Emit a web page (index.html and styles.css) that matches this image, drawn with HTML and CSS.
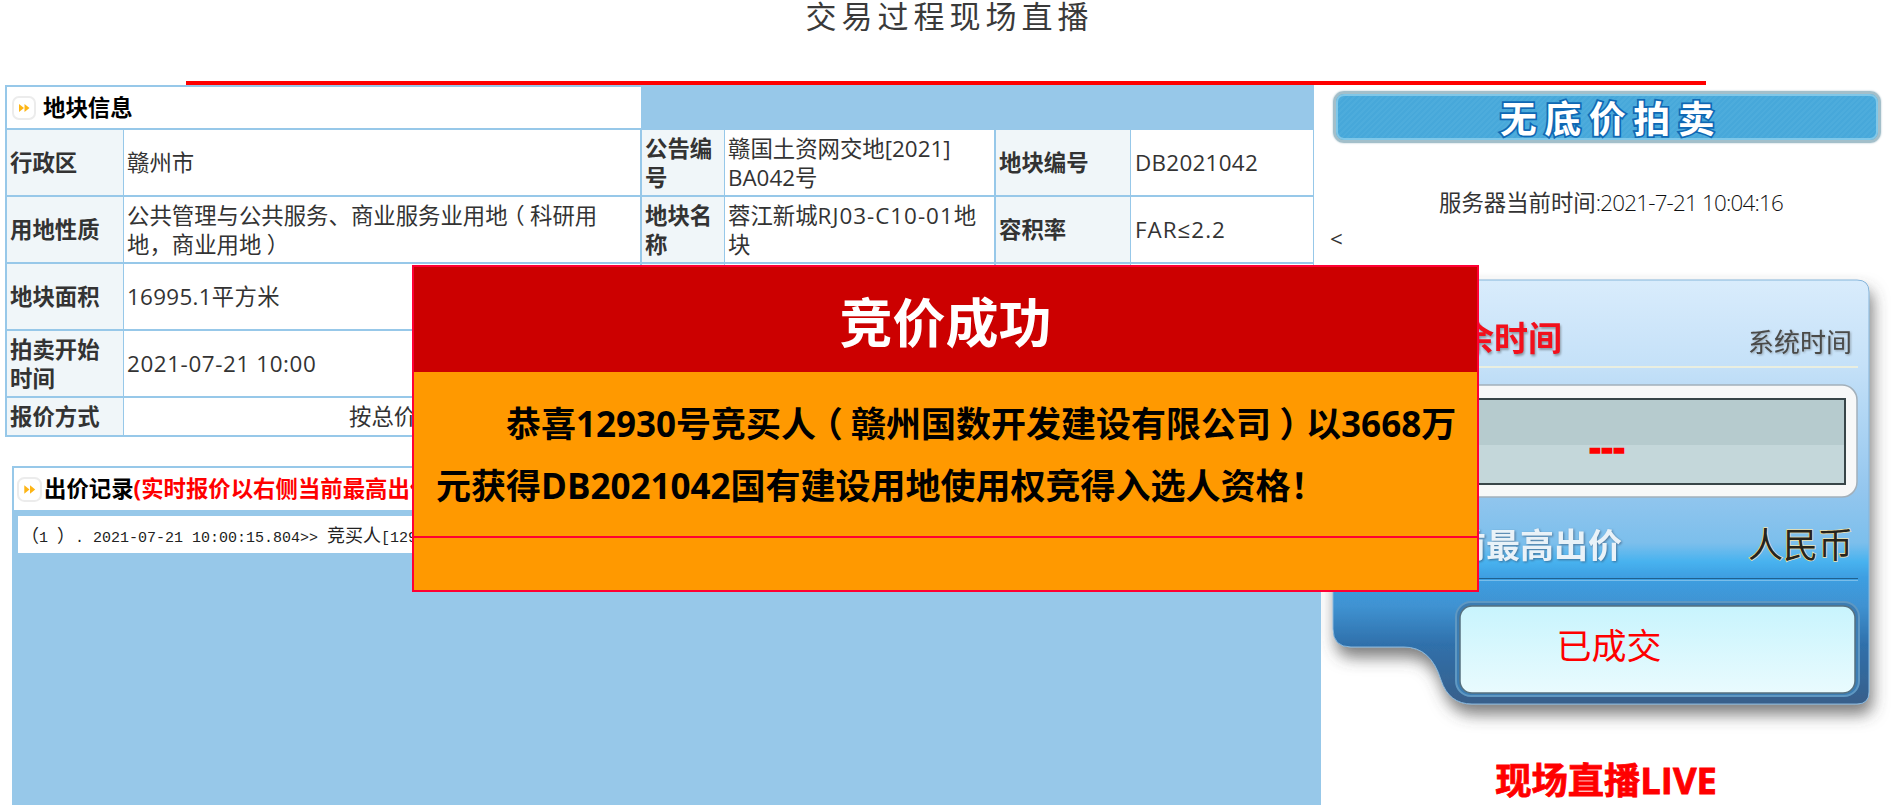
FILE: index.html
```html
<!DOCTYPE html>
<html lang="zh-CN">
<head>
<meta charset="utf-8">
<title>交易过程现场直播</title>
<link rel="stylesheet" href="styles.css">
</head>
<body>
<header class="page-title"><h1>交易过程现场直播</h1></header>
<main class="stage">
  <section class="left-col">
    <div class="info-grid">
      <div class="section-head head-wide">
        <svg class="head-icon" viewBox="0 0 24 24" aria-hidden="true"><rect x="1" y="1" width="22" height="22" rx="6" fill="#fff" stroke="#ececec" stroke-width="2"/><path d="M7 8l5 4-5 4zM12.500 8l5 4-5 4z" fill="#fdb515"/></svg>
        <span>地块信息</span>
      </div>
      <div class="head-fill"></div>
      <div class="label">行政区</div><div class="value end"><span>赣州市</span></div>
      <div class="label">公告编号</div><div class="value end"><span>赣国土资网交地[2021]<wbr>BA042号</span></div>
      <div class="label">地块编号</div><div class="value"><span class="tight">DB2021042</span></div>
      <div class="label">用地性质</div><div class="value end use-cell"><span>公共管理与公共服务、商业服务业用地<span class="punc paren-open">（</span>科研用地<span class="punc">，</span>商业用地<span class="punc paren-close">）</span></span></div>
      <div class="label">地块名称</div><div class="value end"><span>蓉江新城<span class="wider">RJ03-C10-01</span>地块</span></div>
      <div class="label">容积率</div><div class="value"><span class="wider">FAR≤2.2</span></div>
      <div class="label">地块面积</div><div class="value end"><span class="tight">16995.1平方米</span></div>
      <div class="label"></div><div class="value end"></div>
      <div class="label"></div><div class="value"></div>
      <div class="label">拍卖开始时间</div><div class="value end"><span class="wide">2021-07-21 10:00</span></div>
      <div class="label"></div><div class="value end"></div>
      <div class="label"></div><div class="value"></div>
      <div class="label">报价方式</div><div class="value quote-way"><span>按总价</span></div>
    </div>
    <div class="record">
      <div class="section-head record-head">
        <svg class="head-icon" viewBox="0 0 24 24" aria-hidden="true"><rect x="1" y="1" width="22" height="22" rx="6" fill="#fff" stroke="#ececec" stroke-width="2"/><path d="M7 8l5 4-5 4zM12.500 8l5 4-5 4z" fill="#fdb515"/></svg>
        <span>出价记录</span><span class="record-note">(实时报价以右侧当前最高出价为准)</span>
      </div>
      <div class="record-log"><span class="log-cjk">（</span>1 <span class="log-cjk">）</span>. 2021-07-21 10:00:15.804&gt;&gt; <span class="log-cjk">竞买人</span>[12930]</div>
    </div>
  </section>
  <aside class="right-col">
    <div class="banner"><span>无底价拍卖</span></div>
    <p class="server-time">服务器当前时间<span class="clock-digits">:2021-7-21 10:04:16</span></p>
    <p class="stray">&lt;</p>
    <svg class="clock-panel" viewBox="1321 270 570 470" aria-label="竞价面板">
      <defs>
        <linearGradient id="panelFill" x1="0" y1="278" x2="0" y2="702" gradientUnits="userSpaceOnUse">
          <stop offset="0" stop-color="#d9ecfc"/>
          <stop offset=".2" stop-color="#c5e1f8"/>
          <stop offset=".5" stop-color="#93c6ee"/>
          <stop offset=".62" stop-color="#7cbfec"/>
          <stop offset=".665" stop-color="#47b2ef"/>
          <stop offset=".7" stop-color="#3e9fe2"/>
          <stop offset=".77" stop-color="#3f92d1"/>
          <stop offset=".86" stop-color="#2f70ab"/>
          <stop offset="1" stop-color="#385f8a"/>
        </linearGradient>
        <linearGradient id="btnFill" x1="0" y1="0" x2="0" y2="1">
          <stop offset="0" stop-color="#c8f4fd"/>
          <stop offset="1" stop-color="#e9fbfe"/>
        </linearGradient>
        <filter id="panelShadow" x="-5%" y="-5%" width="112%" height="115%">
          <feDropShadow dx="3" dy="10" stdDeviation="8" flood-color="#444" flood-opacity=".7"/>
        </filter>
      </defs>
      <path class="panel-body" d="M1345 278H1857Q1869 278 1869 290V690Q1869 702 1857 702H1472Q1449 702 1441 678Q1431 645 1404 645H1351Q1333 645 1333 627V296Q1333 278 1345 278Z" fill="url(#panelFill)" filter="url(#panelShadow)"/>
      <text class="t-remain" x="1562" y="349" text-anchor="end">剩余时间</text>
      <text class="t-system" x="1852" y="350" text-anchor="end">系统时间</text>
      <rect x="1346" y="364" width="512" height="2" fill="#e9eee0"/>
      <rect x="1346" y="383" width="511" height="112" rx="15" fill="#f7f8f8" stroke="#a3b0ba" stroke-width="1.500"/>
      <rect x="1358" y="397" width="487" height="85" fill="#c4d7da" stroke="#384548" stroke-width="2"/>
      <rect x="1359" y="398" width="485" height="45" fill="#b6cbce"/>
      <text class="t-dash" x="1607" y="458" text-anchor="middle">---</text>
      <text class="t-top" x="1622" y="556" text-anchor="end">当前最高出价</text>
      <text class="t-rmb" x="1853" y="556" text-anchor="end">人民币</text>
      <rect x="1346" y="576" width="512" height="1" fill="#1f618f"/>
      <rect x="1346" y="578" width="512" height="1" fill="#79bdea"/>
      <rect x="1456" y="600" width="403" height="94" rx="15" fill="#3c7db3" stroke="#5f98c2" stroke-width="2"/>
      <rect x="1460" y="604" width="395" height="87" rx="12" fill="url(#btnFill)" stroke="#55707f" stroke-width="1.500"/>
      <text class="t-done" x="1609" y="657" text-anchor="middle">已成交</text>
    </svg>
    <p class="live">现场直播LIVE</p>
  </aside>
</main>
<div class="result-modal">
  <div class="modal-title">竞价成功</div>
  <div class="modal-body"><p>恭喜12930号竞买人<span class="punc paren-open">（</span>赣州国数开发建设有限公司<span class="punc paren-close">）</span>以3668万元获得DB2021042国有建设用地使用权竞得入选人资格<span class="punc">！</span></p></div>
  <div class="modal-foot"></div>
</div>
</body>
</html>
```

FILE: styles.css
```css
* { box-sizing: border-box; }
html, body { height: 100%; margin: 0; }
body {
  display: flex;
  flex-direction: column;
  overflow: hidden;
  position: relative;
  background: #fff;
  color: #333;
  font-family: "Open Sans", "Noto Sans CJK SC", sans-serif;
  font-size: 22.4px;
}
.punc { font-family: "Liberation Sans", "Noto Sans CJK TC", sans-serif; }
.paren-open { display: inline-block; text-indent: 0; transform: translateX(-.24em); }
.paren-close { display: inline-block; text-indent: 0; transform: translateX(.24em); }
.page-title {
  flex: none;
  height: 85px;
  margin: 0 185px 0 186px;
  border-bottom: 4px solid #f00;
}
.page-title h1 {
  margin: 0;
  padding-left: 7px;
  text-align: center;
  font-family: "Liberation Sans", "Noto Sans CJK SC", sans-serif;
  font-size: 31px;
  font-weight: 400;
  line-height: 36px;
  letter-spacing: 5px;
  color: #3a3a3a;
}
.stage { flex: 1; display: flex; min-height: 0; }
.left-col { flex: none; width: 1321px; display: flex; flex-direction: column; }
.info-grid {
  flex: none;
  width: 1309px;
  margin-left: 5px;
  padding: 2px 1px 2px 2px;
  display: grid;
  grid-template-columns: 116px 517px 82px 270px 134px 182px;
  grid-template-rows: 41px 65px 65px 65px 65px 37px;
  column-gap: 1px;
  row-gap: 2px;
  background: #97c8e9;
}
.section-head {
  display: flex;
  align-items: center;
  background: #fff;
  color: #000;
  font-weight: 700;
  line-height: 30px;
}
.head-wide { grid-column: 1 / 3; padding-left: 5px; }
.head-fill { grid-column: 3 / 7; }
.head-icon { width: 24px; height: 24px; margin-right: 7px; flex: none; }
.label {
  display: flex;
  align-items: center;
  padding: 0 4px 0 3px;
  background: #f0f6f9;
  font-weight: 700;
  line-height: 29px;
  color: #333;
}
.value {
  display: flex;
  align-items: center;
  padding: 0 4px;
  background: #fff;
  line-height: 29px;
}
.value.end { border-right: 1px solid #97c8e9; padding-left: 3px; }
.use-cell { font-family: "Liberation Sans", "Noto Sans CJK SC", sans-serif; padding-top: 2px; }
.tight { letter-spacing: .3px; }
.wide { letter-spacing: .6px; }
.wider { letter-spacing: 1px; }
.quote-way { grid-column: 2 / 7; padding-left: 225px; }
.record {
  flex: 1;
  margin: 29px 0 0 12px;
  padding: 2px 0 0 2px;
  background: #97c8e9;
  min-height: 0;
}
.record-head { height: 42px; padding-left: 3px; margin-bottom: 6px; }
.record-head .head-icon { width: 25px; height: 25px; margin-right: 2px; }
.record-note { color: #f00; white-space: nowrap; }
.record-log {
  margin-left: 4px;
  width: 1000px;
  height: 37px;
  padding-left: 3px;
  background: #fff;
  font-family: "Liberation Mono", monospace;
  font-size: 15px;
  line-height: 37px;
  white-space: nowrap;
  color: #222;
}
.log-cjk { font-family: "Noto Sans CJK SC", sans-serif; font-size: 18px; }
.right-col { flex: 1; display: flex; flex-direction: column; min-width: 0; }
.banner {
  flex: none;
  height: 52px;
  margin: 6px 10px 0 12px;
  display: flex;
  align-items: center;
  justify-content: center;
  padding-left: 8px;
  border: 3px solid #a3bfca;
  border-radius: 11px;
  background: repeating-linear-gradient(135deg, #47a8da 0 2px, #4dacdc 2px 4px);
  box-shadow: inset 0 0 0 2px #7fc7e8, 0 0 2px #a3bfca;
}
.banner span {
  font-family: "Noto Sans CJK SC", sans-serif;
  font-size: 37px;
  font-weight: 700;
  line-height: 44px;
  letter-spacing: 7.500px;
  color: #fff;
  -webkit-text-stroke: 3.500px #0f68b4;
  paint-order: stroke fill;
}
.server-time {
  margin: 45px 0 0;
  padding-left: 10px;
  text-align: center;
  line-height: 30px;
  white-space: nowrap;
}
.clock-digits { font-weight: 300; letter-spacing: -.8px; color: #111; }
.stray { margin: 6px 0 0 9px; line-height: 30px; }
.clock-panel { flex: none; width: 570px; height: 470px; margin-top: 18px; display: block; }
.clock-panel text { font-family: "Noto Sans CJK SC", sans-serif; }
.panel-body { stroke: #86b5da; stroke-width: 1; }
.t-remain { font-size: 34px; font-weight: 700; fill: #f2101c; filter: drop-shadow(1px 2px 1px rgba(60,60,60,.45)); }
.t-system { font-size: 26px; fill: #4a4a48; filter: drop-shadow(1px 1px 1px rgba(60,60,60,.4)); }
.clock-panel .t-dash { font-family: "Liberation Sans", sans-serif; font-size: 36px; font-weight: 700; fill: #f00; stroke: #f00; stroke-width: 1.500; }
.t-top { font-size: 34px; font-weight: 700; fill: #e9f2f8; filter: drop-shadow(1px 1px 1px rgba(40,60,90,.55)); }
.t-rmb { font-size: 35px; fill: #26241c; stroke: #f0e3ad; stroke-width: 1.500; paint-order: stroke fill; }
.t-done { font-size: 35px; fill: #f00; font-weight: 400; }
.live {
  flex: none;
  margin: 16px 0 0;
  text-align: center;
  line-height: 44px;
  font-size: 36.300px;
  font-weight: 700;
  color: #f00;
  -webkit-text-stroke: .8px #f00;
  white-space: nowrap;
}
.result-modal {
  position: absolute;
  left: 412px;
  top: 265px;
  width: 1067px;
  height: 327px;
  display: flex;
  flex-direction: column;
  border: 2px solid #f03;
  background: #f90;
}
.modal-title {
  flex: none;
  height: 105px;
  background: #c00;
  color: #fff;
  text-align: center;
  font-family: "Noto Sans CJK SC", sans-serif;
  font-size: 53px;
  font-weight: 700;
  line-height: 106px;
}
.modal-body {
  flex: none;
  height: 166px;
  border-bottom: 2px solid #f03;
  padding: 21px 0 0 22px;
  color: #000;
  font-size: 35px;
  font-weight: 700;
  line-height: 61px;
}
.modal-body p { margin: 0; text-indent: 2em; }
.modal-foot { flex: 1; }
```
